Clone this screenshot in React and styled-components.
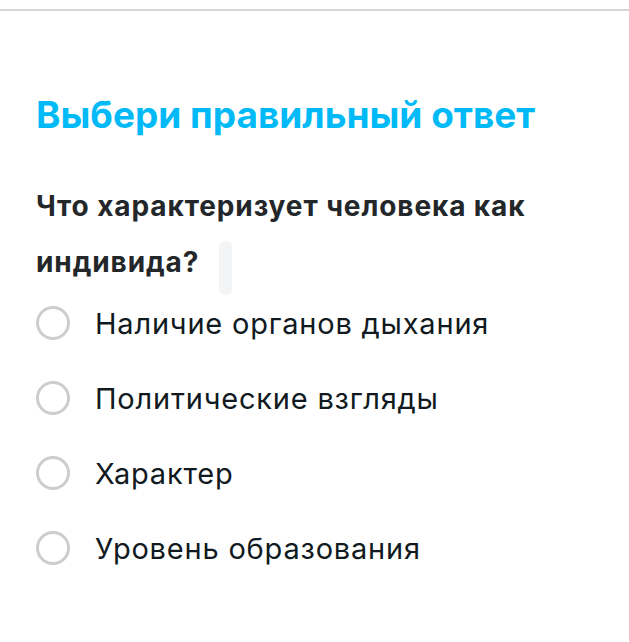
import React from 'react'
import styled, { createGlobalStyle } from 'styled-components'

const GlobalStyle = createGlobalStyle`
  body {
    margin: 0;
    background: #fff;
    font-family: 'Inter', 'Noto Sans', sans-serif;
  }
`

const Page = styled.div`
  width: 629px;
  min-height: 642px;
  background: #fff;
  padding-top: 9px;
  box-sizing: border-box;
`

const TopRule = styled.div`
  height: 2px;
  background: #d6d6d6;
`

const Content = styled.div`
  padding: 82px 0 0 36px;
`

const Title = styled.h1`
  margin: 0;
  font-family: 'Inter', sans-serif;
  font-weight: 700;
  font-size: 37px;
  line-height: 44px;
  letter-spacing: 0;
  color: #00baf7;
`

const Question = styled.p`
  margin: 41px 0 0;
  width: 560px;
  font-family: 'Inter', sans-serif;
  font-weight: 700;
  font-size: 28px;
  line-height: 56px;
  letter-spacing: 0.9px;
  color: #23272a;
`

const Caret = styled.span`
  display: inline-block;
  width: 13px;
  height: 54px;
  margin-left: 20px;
  vertical-align: -23px;
  border-radius: 6px;
  background: #f3f4f5;
`

const Options = styled.div`
  display: flex;
  flex-direction: column;
  gap: 41px;
  margin-top: 11px;
`

const Option = styled.label`
  display: flex;
  align-items: center;
  gap: 25px;
  height: 34px;
  cursor: pointer;
`

const Radio = styled.span`
  flex: none;
  width: 34px;
  height: 34px;
  box-sizing: border-box;
  border: 3px solid #cdcdcd;
  border-radius: 50%;
`

const OptionText = styled.span`
  font-family: 'Inter', sans-serif;
  font-weight: 400;
  font-size: 29px;
  letter-spacing: 0.8px;
  color: #101a20;
`

const answers = [
  'Наличие органов дыхания',
  'Политические взгляды',
  'Характер',
  'Уровень образования',
]

const App = () => {
  return (
    <Page>
      <GlobalStyle />
      <TopRule />
      <Content>
        <Title>Выбери правильный ответ</Title>
        <Question>
          Что характеризует человека как индивида?
          <Caret />
        </Question>
        <Options>
          {answers.map((a, i) => (
            <Option key={`Answer_${i}`}>
              <Radio />
              <OptionText>{a}</OptionText>
            </Option>
          ))}
        </Options>
      </Content>
    </Page>
  )
}

export default App
